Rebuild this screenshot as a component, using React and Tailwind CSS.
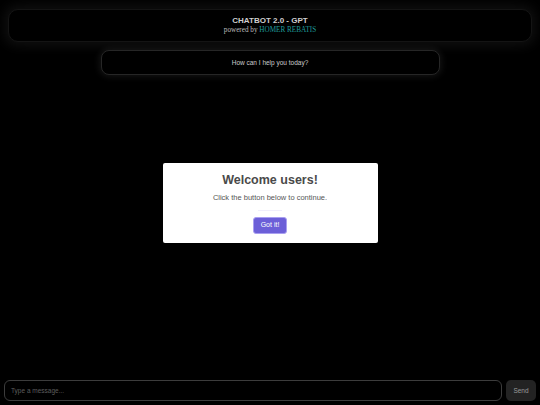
import React from "react";

export default function App() {
  return (
    <div className="relative flex h-[405px] w-full flex-col overflow-hidden bg-black" style={{ fontFamily: '"Liberation Sans", Arial, sans-serif' }}>
      <div className="mx-[8px] mt-[9px] flex h-[33px] flex-col items-center justify-center rounded-[10px] border border-[#141414] bg-black shadow-[0_0_12px_4px_rgba(255,255,255,0.06)]">
        <div className="text-[8px] font-bold leading-[10px] text-[#cfcfcf]">CHATBOT 2.0 - GPT</div>
        <div className="text-[7.2px] leading-[9px] text-[#bdbdbd]" style={{ fontFamily: '"Liberation Serif", "Times New Roman", serif' }}>
          powered by <span className="text-[#1f9a9a]">HOMER REBATIS</span>
        </div>
      </div>

      <div className="mx-auto mt-[8px] flex h-[25px] w-[339px] items-center justify-center rounded-[8px] border border-[#262626] bg-black shadow-[0_0_6px_2px_rgba(255,255,255,0.07)]">
        <span className="text-[6.5px] text-[#cccccc]">How can I help you today?</span>
      </div>

      <div className="flex-1" />

      <div className="flex gap-[4px] px-[4px] pb-[4px]">
        <div className="flex h-[21px] flex-1 items-center rounded-[6px] border border-[#3c3c3c] bg-black px-[6px]">
          <span className="text-[6.5px] text-[#5e5e5e]">Type a message...</span>
        </div>
        <div className="flex h-[21px] w-[30px] items-center justify-center rounded-[5px] bg-[#232323]">
          <span className="text-[6.5px] text-[#9a9a9a]">Send</span>
        </div>
      </div>

      <div className="absolute inset-0 flex items-center justify-center">
        <div className="flex h-[80px] w-[215px] flex-col items-center rounded-[2px] bg-white pt-[10px]">
          <div className="text-[12.5px] font-bold leading-[15px] text-[#4a4a4a]">Welcome users!</div>
          <div className="mt-[5px] text-[7.5px] leading-[9px] text-[#555]">Click the button below to continue.</div>
          <div className="mt-[8px] h-px w-[24px] bg-[#f0eefc]" />
          <div className="mt-[6px] flex h-[17px] w-[34px] items-center justify-center rounded-[3px] border border-[#a99ff0] bg-[#6c5fd8]">
            <span className="text-[7px] text-white">Got it!</span>
          </div>
        </div>
      </div>
    </div>
  );
}
